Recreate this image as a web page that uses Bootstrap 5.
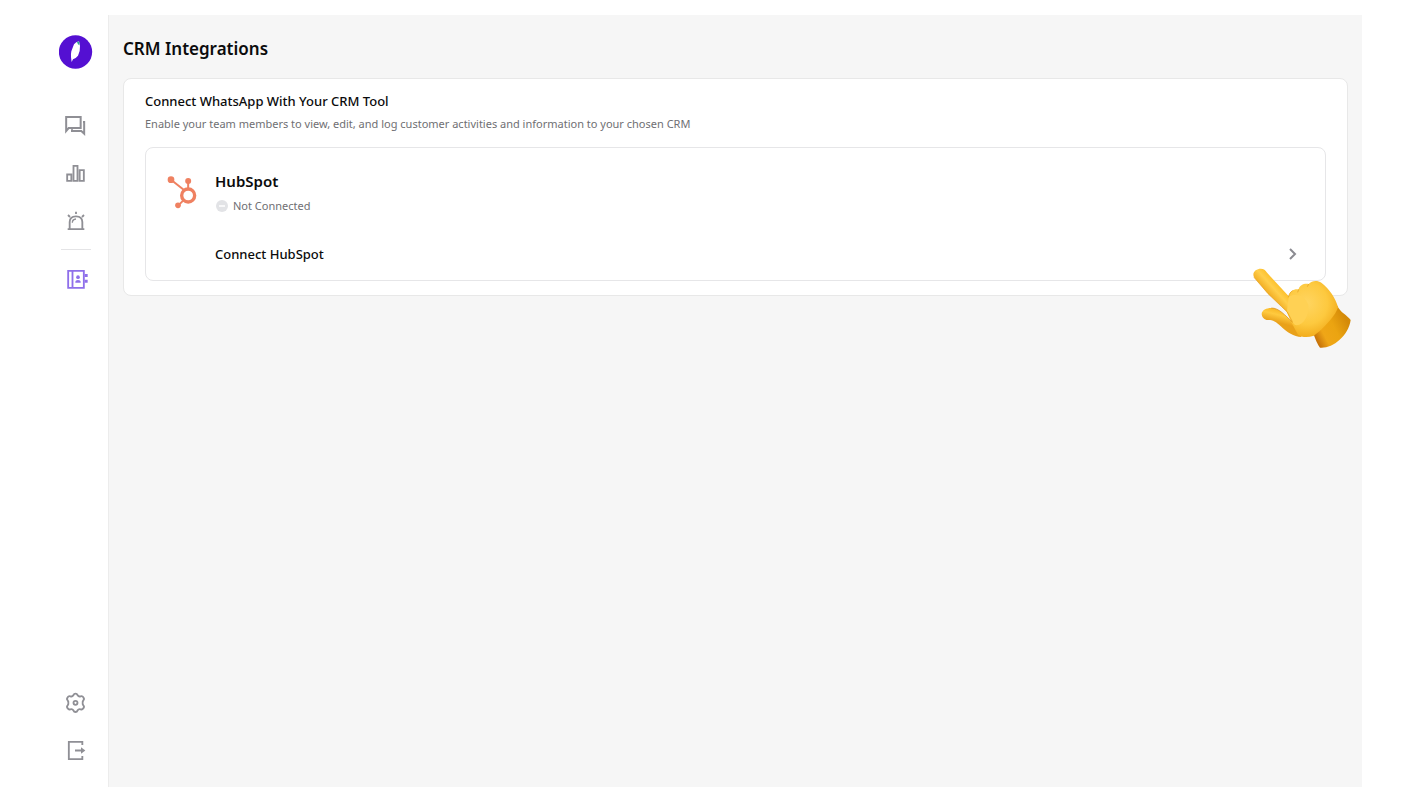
<!DOCTYPE html>
<html lang="en">
<head>
<meta charset="utf-8">
<meta name="viewport" content="width=device-width, initial-scale=1">
<title>CRM Integrations</title>
<link rel="stylesheet" href="https://cdn.jsdelivr.net/npm/bootstrap@5.3.0/dist/css/bootstrap.min.css">
<style>
  body { font-family: "Noto Sans", sans-serif; color: #0b0b0c; background: #fff; }
  a { color: inherit; text-decoration: none; }
  svg { display: block; }
  .app-shell { min-height: 100vh; padding: 15px 44px 17px; }
  .side-rail { width: 64px; padding: 20px 0 24px; color: #8f8f95; }
  .brand-mark { margin-bottom: 44px; margin-right: 1px; }
  .rail-rule { width: 30px; height: 1px; background: #e4e4e6; }
  .rail-active { color: #8f6fea; }
  .page-main { background: #f6f6f6; border-left: 1px solid #ececec; padding: 20px 14px; }
  .page-title { font-size: 17px; line-height: 28px; font-weight: 600; margin-bottom: 15px; }
  .crm-panel { border: 1px solid #e8e8e8; border-radius: 8px; padding: 12px 21px 14px; }
  .panel-title { font-size: 13px; line-height: 20px; font-weight: 500; margin: 0; }
  .panel-text { font-size: 11px; line-height: 26px; color: #6f6f73; margin: 0 0 10px; }
  .tool-box { border: 1px solid #e6e6e8; border-radius: 8px; padding: 20px 21px 14px; }
  .tool-logo { width: 48px; padding-top: 7px; }
  .tool-name { font-size: 15px; line-height: 26px; font-weight: 600; margin: 0; }
  .tool-state { font-size: 11px; line-height: 24px; color: #6f6f73; gap: 4px; }
  .tool-link { font-size: 13px; line-height: 24px; font-weight: 500; margin-top: 24px; }
  .pointer-hand { position: absolute; right: -5px; bottom: -54px; pointer-events: none; }
</style>
</head>
<body>
<div class="app-shell d-flex">
  <nav class="side-rail d-flex flex-column align-items-center flex-shrink-0" aria-label="Main">
    <a href="#" class="brand-mark" aria-label="Home">
      <svg width="34" height="34" viewBox="57 75 102 102"><circle cx="106.500" cy="126" r="50" fill="#5410d2"/><path d="M95 156 93 142Q92 134 94 124L102 103Q108 96 117 94L120 108Q121 124 114 137L107 144 99 148Z" fill="#fff"/><path d="M111 97Q114 94 118 95V106L114 103Z" fill="#27a98c"/></svg>
    </a>
    <div class="d-flex flex-column gap-4">
      <a href="#" aria-label="Chats"><svg width="24" height="24" viewBox="42 24 72 72" fill="none" stroke="currentColor" stroke-width="6"><path d="M48.500 78V36H92V69H56Z"/><path d="M99 51h3.500V86L94 78H66V73"/></svg></a>
      <a href="#" aria-label="Analytics"><svg width="24" height="24" viewBox="42 33 72 72" fill="none" stroke="currentColor" stroke-width="5.500"><path d="M51.500 73.500H64V92.500H51.500ZM70.500 47.500H82.500V92.500H70.500ZM89 60.500H101.500V92.500H89Z"/></svg></a>
      <a href="#" aria-label="Alerts"><svg width="24" height="24" viewBox="42 177 72 72" fill="none" stroke="currentColor" stroke-width="5.500"><path d="M53 237.500H103M59 236V216Q59 199 78 199T97 216V236"/><path d="M67 218Q67 208 78 207" stroke-width="4"/><path d="M78 185V192M54 195 60 201M102 195 96 201"/></svg></a>
    </div>
    <div class="rail-rule mt-3 mb-3"></div>
    <a href="#" class="rail-active" aria-label="CRM Integrations" aria-current="page"><svg width="24" height="24" viewBox="42 79 72 72" fill="none" stroke="currentColor" stroke-width="5.500"><path d="M54.500 93.500H101.500V144.500H54.500ZM67.500 94V144"/><path d="M104 103h9v9h-9zM104 120h9v9h-9z" fill="currentColor" stroke="none"/><circle cx="84" cy="112.500" r="5.500" fill="currentColor" stroke="none"/><path d="M76 129V126Q76 121 84 121T92 126V129Z" fill="currentColor" stroke="none"/></svg></a>
    <div class="d-flex flex-column gap-4 mt-auto">
      <a href="#" aria-label="Settings"><svg width="24" height="24" viewBox="42 33 72 72" fill="none" stroke="currentColor" stroke-width="5.500" stroke-linejoin="round"><path d="M76.500 41Q81 41 83 46Q86 51 92 49Q97 47 100 52Q104 57 100 61Q97 65 98 68.500Q97 72 100 76Q104 80 100 85Q97 90 92 88Q86 86 83 91Q81 96 76.500 96Q72 96 70 91Q67 86 61 88Q56 90 53 85Q49 80 53 76Q56 72 55 68.500Q56 65 53 61Q49 57 53 52Q56 47 61 49Q67 51 70 46Q72 41 76.500 41Z"/><circle cx="76.500" cy="68.500" r="6"/></svg></a>
      <a href="#" aria-label="Log out"><svg width="24" height="24" viewBox="42 177 72 72" fill="none" stroke="currentColor" stroke-width="5.500"><path d="M97 195V185.500H56.500V237.500H97V228M75 211.500H96"/><path d="M93 202 106 211.500 93 221Z" fill="currentColor" stroke="none"/></svg></a>
    </div>
  </nav>

  <main class="page-main flex-grow-1">
    <h1 class="page-title">CRM Integrations</h1>
    <section class="crm-panel bg-white position-relative">
      <h2 class="panel-title">Connect WhatsApp With Your CRM Tool</h2>
      <p class="panel-text">Enable your team members to view, edit, and log customer activities and information to your chosen CRM</p>
      <div class="tool-box d-flex">
        <div class="tool-logo flex-shrink-0">
          <svg width="32" height="36" viewBox="81 90 96 108" fill="none" stroke="#ef8161"><circle cx="144.500" cy="151.500" r="19.500" stroke-width="10"/><path d="M93 104 132 135M144.500 108V132M115 181 130 166" stroke-width="6"/><g fill="#ef8161" stroke="none"><circle cx="93" cy="104" r="10"/><circle cx="144.500" cy="108" r="9"/><circle cx="114" cy="181" r="8.500"/></g></svg>
        </div>
        <div class="flex-grow-1">
          <h3 class="tool-name">HubSpot</h3>
          <div class="tool-state d-flex align-items-center">
            <svg width="14" height="14" viewBox="0 0 14 14"><circle cx="7" cy="7" r="6" fill="#e2e3e6"/><path d="M4 7h6" stroke="#fff" stroke-width="1.500"/></svg>
            <span>Not Connected</span>
          </div>
          <a href="#" class="tool-link d-flex align-items-center justify-content-between">
            <span>Connect HubSpot</span>
            <svg width="24" height="24" viewBox="0 0 24 24" fill="none" stroke="#8b8b91" stroke-width="2"><path d="M10 7 15 12 10 17"/></svg>
          </a>
        </div>
      </div>
      <svg class="pointer-hand" width="100" height="81" viewBox="36 99 300 243" aria-hidden="true">
        <defs>
          <radialGradient id="palm" gradientUnits="userSpaceOnUse" cx="200" cy="205" r="125"><stop offset="0" stop-color="#ffd561"/><stop offset=".5" stop-color="#fdc93f"/><stop offset=".8" stop-color="#f3ae1e"/><stop offset="1" stop-color="#d98a0c"/></radialGradient>
          <linearGradient id="finger" gradientUnits="userSpaceOnUse" x1="112" y1="145" x2="82" y2="172"><stop offset="0" stop-color="#fdc02b"/><stop offset=".45" stop-color="#ffcf4c"/><stop offset="1" stop-color="#f3b026"/></linearGradient>
          <linearGradient id="wrist" gradientUnits="userSpaceOnUse" x1="230" y1="315" x2="325" y2="265"><stop offset="0" stop-color="#c8740a"/><stop offset=".25" stop-color="#efa617"/><stop offset=".6" stop-color="#eba411"/><stop offset="1" stop-color="#d48a08"/></linearGradient>
          <linearGradient id="thumb" gradientUnits="userSpaceOnUse" x1="105" y1="218" x2="95" y2="258"><stop offset="0" stop-color="#f7b420"/><stop offset=".45" stop-color="#ffca3f"/><stop offset="1" stop-color="#e9a11a"/></linearGradient>
        </defs>
        <path d="M218 290C226 313 234 330 240 338C275 342 325 305 332 255C322 240 300 232 292 212Z" fill="url(#wrist)"/>
        <path d="M65 237C66 225 79 219 94 219C117 219 133 239 158 262L185 306C160 305 141 291 128 279C110 262 100 254 83 255C74 255 66 248 65 237Z" fill="url(#thumb)"/>
        <path d="M146 186C148 168 162 161 176 163C178 149 195 144 206 147C216 135 234 136 244 143C269 162 287 190 294 216C290 238 250 282 222 302C202 308 185 307 174 299L154 262 135 220Z" fill="url(#palm)"/>
        <path d="M42 127C35 111 49 101 62 101C71 101 77 106 80 112L149 187 172 215 160 262C155 252 149 243 142 232L125 215 84 176Z" fill="url(#finger)"/>
        <path d="M146 186C164 174 195 180 205 210C208 240 190 275 165 270L154 258 141 228Z" fill="#ffd154"/>
        <path d="M94 219C117 219 133 239 158 262" fill="none" stroke="#d78a10" stroke-width="2"/>
        <path d="M42 127 84 176 125 215 142 231 157 260" fill="none" stroke="#e49b16" stroke-width="2"/>
        <path d="M145 187C148 176 151 171 158 167M176 163 173 172M206 147 202 155" fill="none" stroke="#e39d19" stroke-width="2"/>
      </svg>
    </section>
  </main>
</div>
<script src="https://cdn.jsdelivr.net/npm/bootstrap@5.3.0/dist/js/bootstrap.bundle.min.js"></script>
</body>
</html>
